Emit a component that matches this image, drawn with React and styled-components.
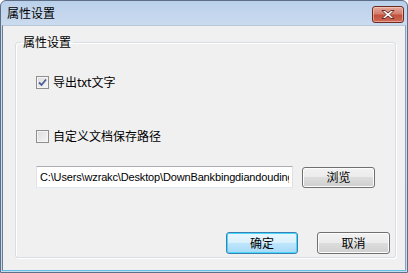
import React from 'react';
import styled, { createGlobalStyle } from 'styled-components';

const GlobalStyle = createGlobalStyle`
  html, body {
    margin: 0;
    padding: 0;
    background: #ffffff;
  }
  body {
    font-family: "Noto Sans CJK SC", "Liberation Sans", sans-serif;
    font-size: 12px;
    color: #000;
  }
`;

const Window = styled.div`
  width: 408px;
  height: 273px;
  box-sizing: border-box;
  display: flex;
  flex-direction: column;
  padding: 0 1px 1px 1px;
  border: 1px solid #5d6f86;
  border-radius: 6px 6px 0 0;
  background: linear-gradient(#bad0ea, #cbdbef 24px, #c9daef);
`;

const TitleBar = styled.div`
  height: 24px;
  display: flex;
  align-items: center;
  justify-content: space-between;
  padding: 0 2px 0 5px;
`;

const Title = styled.span`
  font-size: 12px;
  line-height: 16px;
  color: #000;
`;

const CloseButton = styled.button`
  width: 32px;
  height: 17px;
  margin-top: 2px;
  padding: 0;
  display: flex;
  align-items: center;
  justify-content: center;
  border: 1px solid #6b2a22;
  border-radius: 3px;
  background: linear-gradient(#e5a99c, #d47e6d 45%, #c2503c 55%, #cf6a56);
  box-shadow: inset 0 0 0 1px rgba(255, 220, 210, 0.5);
`;

const Client = styled.div`
  flex: 1;
  display: flex;
  flex-direction: column;
  background: #f0f0f0;
  border-top: 1px solid #b8c7d9;
  border-left: 1px solid #6b7d92;
  border-right: 1px solid #8fa1b6;
  border-bottom: 1px solid #5fc0e4;
  padding: 0 9px 12px 12px;
`;

const GroupBox = styled.fieldset`
  flex: 1;
  margin: 8px 0 0 0;
  min-width: 0;
  padding: 0 5px 3px 5px;
  border: 1px solid #d5dfe5;
  border-radius: 3px;
  box-shadow: inset 1px 1px 0 #fff, 1px 1px 0 #fff;
  display: flex;
  flex-direction: column;
`;

const Legend = styled.legend`
  padding: 0 2px;
  line-height: 16px;
  font-size: 12px;
`;

const Body = styled.div`
  flex: 1;
  display: flex;
  flex-direction: column;
  padding-left: 15px;
`;

const CheckRow = styled.label`
  height: 16px;
  display: flex;
  align-items: center;
  gap: 4px;
  margin-top: ${p => p.$top}px;
  line-height: 16px;
`;

const Box = styled.span`
  width: 11px;
  height: 11px;
  border: 1px solid #8e8f8f;
  background: linear-gradient(135deg, #dcdcdc, #f6f6f6);
  box-shadow: inset 0 0 0 1px #f4f4f4;
  display: flex;
  align-items: center;
  justify-content: center;
`;

const PathRow = styled.div`
  display: flex;
  align-items: center;
  gap: 9px;
  margin-top: 22px;
`;

const PathInput = styled.input`
  width: 257px;
  height: 22px;
  box-sizing: border-box;
  margin: 0;
  padding: 0 3px;
  border: 1px solid #abadb3;
  border-left-color: #e2e3ea;
  border-right-color: #dbdfe6;
  border-bottom-color: #e3e9ef;
  background: #fff;
  font-family: "Liberation Sans", Arial, sans-serif;
  font-size: 11px;
  letter-spacing: -0.15px;
  color: #000;
  outline: none;
`;

const Button = styled.button`
  width: ${p => p.$w}px;
  height: ${p => p.$h || 22}px;
  box-sizing: border-box;
  margin: 0;
  padding: 0;
  border: 1px solid ${p => (p.$default ? '#3c7fb1' : '#707070')};
  border-radius: 3px;
  background: ${p =>
    p.$default
      ? 'linear-gradient(#eaf6fd, #d9f0fc 50%, #bee6fd 50%, #a7d9f5)'
      : 'linear-gradient(#f2f2f2, #ebebeb 50%, #dddddd 50%, #cfcfcf)'};
  box-shadow: inset 0 0 0 1px ${p => (p.$default ? '#48d8fb' : '#fcfcfc')};
  font-family: "Noto Sans CJK SC", sans-serif;
  font-size: 12px;
  line-height: 16px;
  color: #000;
`;

const ButtonRow = styled.div`
  display: flex;
  justify-content: flex-end;
  gap: 19px;
  margin-top: auto;
`;

const CloseGlyph = () => (
  <svg width="14" height="11" viewBox="0 0 14 11">
    <path
      d="M1 1.5 L4 1.5 L7 4 L10 1.5 L13 1.5 L9 5.5 L13 9.5 L10 9.5 L7 7 L4 9.5 L1 9.5 L5 5.5 Z"
      fill="#fff"
      stroke="#5a2018"
      strokeWidth="0.9"
      strokeLinejoin="round"
    />
  </svg>
);

const CheckMark = () => (
  <svg width="9" height="9" viewBox="0 0 9 9">
    <path d="M1 4.5 L3.5 7 L8 1.5" fill="none" stroke="#4a5f97" strokeWidth="1.8" />
  </svg>
);

const Checkbox = ({ checked, top, children }) => (
  <CheckRow $top={top}>
    <Box>{checked && <CheckMark />}</Box>
    <span>{children}</span>
  </CheckRow>
);

export default function App() {
  return (
    <>
      <GlobalStyle />
      <Window>
        <TitleBar>
          <Title>属性设置</Title>
          <CloseButton aria-label="关闭">
            <CloseGlyph />
          </CloseButton>
        </TitleBar>
        <Client>
          <GroupBox>
            <Legend>属性设置</Legend>
            <Body>
              <Checkbox checked top={24}>导出txt文字</Checkbox>
              <Checkbox top={38}>自定义文档保存路径</Checkbox>
              <PathRow>
                <PathInput readOnly value="C:\Users\wzrakc\Desktop\DownBankbingdiandouding\" />
                <Button $w={73} $h={21}>浏览</Button>
              </PathRow>
              <ButtonRow>
                <Button $w={72} $default>确定</Button>
                <Button $w={73}>取消</Button>
              </ButtonRow>
            </Body>
          </GroupBox>
        </Client>
      </Window>
    </>
  );
}
